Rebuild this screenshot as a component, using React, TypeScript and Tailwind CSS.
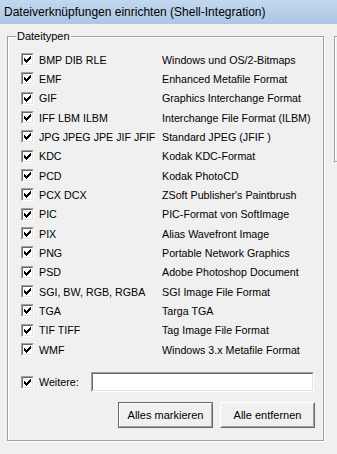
import React from "react";

const rows: [string, string][] = [
  ["BMP DIB RLE", "Windows und OS/2-Bitmaps"],
  ["EMF", "Enhanced Metafile Format"],
  ["GIF", "Graphics Interchange Format"],
  ["IFF LBM ILBM", "Interchange File Format (ILBM)"],
  ["JPG JPEG JPE JIF JFIF", "Standard JPEG (JFIF )"],
  ["KDC", "Kodak KDC-Format"],
  ["PCD", "Kodak PhotoCD"],
  ["PCX DCX", "ZSoft Publisher's Paintbrush"],
  ["PIC", "PIC-Format von SoftImage"],
  ["PIX", "Alias Wavefront Image"],
  ["PNG", "Portable Network Graphics"],
  ["PSD", "Adobe Photoshop Document"],
  ["SGI, BW, RGB, RGBA", "SGI Image File Format"],
  ["TGA", "Targa TGA"],
  ["TIF TIFF", "Tag Image File Format"],
  ["WMF", "Windows 3.x Metafile Format"],
];

const checkPattern = [
  "......X",
  ".....XX",
  "X...XXX",
  "XX.XXX.",
  "XXXXX..",
  ".XXX...",
  "..X....",
];

function Check() {
  const rects: React.ReactElement[] = [];
  checkPattern.forEach((r, y) =>
    r.split("").forEach((c, x) => {
      if (c === "X") rects.push(<rect key={`${x}-${y}`} x={x} y={y} width={1} height={1} fill="#000" />);
    })
  );
  return (
    <svg width="7" height="7" viewBox="0 0 7 7" shapeRendering="crispEdges">
      {rects}
    </svg>
  );
}

function CheckBox() {
  return (
    <div className="w-[13px] h-[13px] shrink-0 border border-t-[#a0a0a0] border-l-[#a0a0a0] border-b-white border-r-white">
      <div className="w-full h-full border border-t-[#696969] border-l-[#696969] border-b-[#e3e3e3] border-r-[#e3e3e3] bg-white flex items-center justify-center">
        <Check />
      </div>
    </div>
  );
}

export default function App() {
  return (
    <div
      className="w-[337px] h-[454px] bg-[#f0f0f0] overflow-hidden text-black"
      style={{ fontFamily: '"Liberation Sans", Arial, sans-serif' }}
    >
      <div className="h-[24px] bg-gradient-to-b from-[#c3d8ee] to-[#aac6e5] flex items-center pl-[4px] text-[12px] text-black">
        Dateiverknüpfungen einrichten (Shell-Integration)
      </div>
      <div className="flex pt-[12px] pl-[7px] gap-[10px]">
        <div className="relative w-[317px] h-[405px] shrink-0 border border-[#a0a0a0] shadow-[inset_1px_1px_0_#fff,1px_1px_0_#fff] pl-[13px] pt-[13px] text-[10.7px]">
          <span className="absolute left-[8px] top-[-8px] px-[1px] bg-[#f0f0f0] leading-[14px] text-[11px]">
            Dateitypen
          </span>
          <div className="flex flex-col">
            {rows.map(([a, b]) => (
              <div key={a} className="h-[19.33px] flex items-center">
                <div className="w-[141px] flex items-center gap-[5px]">
                  <CheckBox />
                  <span className="whitespace-nowrap">{a}</span>
                </div>
                <span className="whitespace-nowrap">{b}</span>
              </div>
            ))}
          </div>
          <div className="flex items-center mt-[13px] h-[20px]">
            <div className="w-[70px] flex items-center gap-[5px]">
              <CheckBox />
              <span>Weitere:</span>
            </div>
            <div className="w-[223px] h-[20px] border border-t-[#a0a0a0] border-l-[#a0a0a0] border-b-white border-r-white">
              <div className="w-full h-full border border-t-[#696969] border-l-[#696969] border-b-[#e3e3e3] border-r-[#e3e3e3] bg-white" />
            </div>
          </div>
          <div className="flex justify-end gap-[7px] mt-[10px] pr-[8px]">
            <button className="w-[95px] h-[26px] border border-[#696969] p-0 bg-[#f0f0f0]">
              <div className="w-full h-full border border-t-white border-l-white border-b-[#a0a0a0] border-r-[#a0a0a0] flex items-center justify-center text-[11px]">
                Alles markieren
              </div>
            </button>
            <button className="w-[95px] h-[26px] border border-t-white border-l-white border-b-[#696969] border-r-[#696969] p-0 bg-[#f0f0f0]">
              <div className="w-full h-full border border-t-[#f0f0f0] border-l-[#f0f0f0] border-b-[#a0a0a0] border-r-[#a0a0a0] flex items-center justify-center text-[11px]">
                Alle entfernen
              </div>
            </button>
          </div>
        </div>
        <div className="w-[40px] h-[126px] shrink-0 border border-[#a0a0a0] shadow-[inset_1px_1px_0_#fff,1px_1px_0_#fff]" />
      </div>
    </div>
  );
}
